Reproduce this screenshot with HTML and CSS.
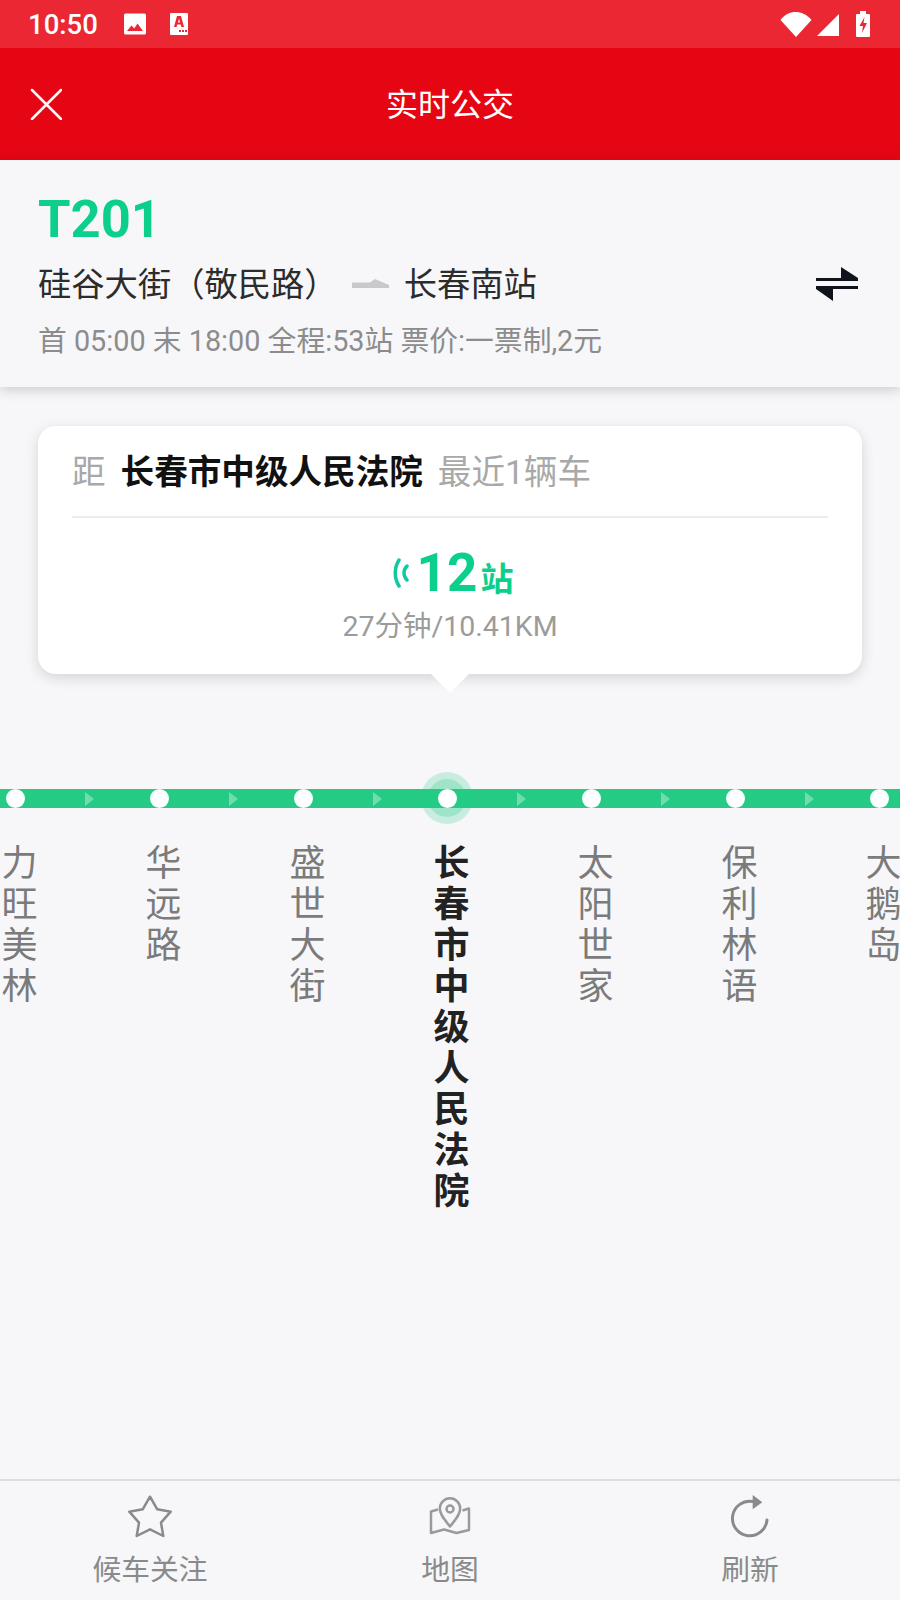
FILE: index.html
```html
<!DOCTYPE html>
<html lang="zh-CN">
<head>
    <meta charset="UTF-8">
    <meta name="viewport" content="width=device-width, initial-scale=1.0">
    <title>实时公交</title>
    <link rel="stylesheet" href="styles.css">
</head>
<body>
    <div class="screen">
        <div class="status">
            <span class="clock">10:50</span>
            <svg class="st-pic" viewBox="0 0 24 24" width="24" height="24">
                <path fill="#fff" d="M1 3a1.500 1.500 0 0 1 1.500-1.500h19A1.500 1.500 0 0 1 23 3v18a1.500 1.500 0 0 1-1.500 1.500h-19A1.500 1.500 0 0 1 1 21z"/>
                <path fill="#ea2733" d="M4 19l4.500-5.500 2.800 3 3.200-5 5.500 7.500z"/>
            </svg>
            <svg class="st-a" viewBox="0 0 20 24" width="20" height="24">
                <path fill="#fff" d="M2 1h16a1 1 0 0 1 1 1v20a1 1 0 0 1-1 1H2a1 1 0 0 1-1-1V2a1 1 0 0 1 1-1z"/>
                <path fill="#ea2733" d="M8 4h4l3 11h-2.600l-.6-2.500H8.200L7.600 15H5zm1 6.500h2L10 6.500zM10 18h2v2h-2zm3 0h2v2h-2zm3 0h2v2h-2z"/>
            </svg>
            <span class="status-fill"></span>
            <svg class="st-wifi" viewBox="0 0 32 26" width="32" height="26">
                <path fill="#fff" d="M0.500 9C4.500 3.500 10 1 15.500 1S27 3.500 31.500 9L16 26z"/>
            </svg>
            <svg class="st-signal" viewBox="0 0 24 24" width="24" height="24">
                <path fill="#fff" d="M23 2v22H1z"/>
            </svg>
            <svg class="st-batt" viewBox="0 0 14 26" width="14" height="26">
                <path fill="#fff" d="M4 0h6v3h3a1 1 0 0 1 1 1v21a1 1 0 0 1-1 1H1a1 1 0 0 1-1-1V4a1 1 0 0 1 1-1h3z"/>
                <path fill="#ea2733" d="M8.500 6L3.500 15H7l-1 7 5-10H7.500z"/>
            </svg>
        </div>

        <div class="topbar">
            <svg class="close" viewBox="0 0 32 32" width="32" height="32">
                <path d="M2 2l29 29M31 2L2 31" stroke="#fff" stroke-width="2.500" stroke-linecap="round" fill="none"/>
            </svg>
            <div class="topbar-title">实时公交</div>
        </div>

        <div class="line-info">
            <div class="line-no">T201</div>
            <div class="route">
                <span class="route-from">硅谷大街（敬民路）</span>
                <svg class="route-arrow" viewBox="0 0 38 10" width="38" height="10">
                    <path fill="#c9c9c9" d="M0 3.500H18L23 0 37 6V9H0z"/>
                </svg>
                <span class="route-to">长春南站</span>
                <span class="route-fill"></span>
                <svg class="swap" viewBox="0 0 42 34" width="42" height="34">
                    <path fill="#10131c" d="M0 11h42v3H0zM25 0l17 11H25zM0 19h42v3H0zM17 34L0 22h17z"/>
                </svg>
            </div>
            <div class="line-meta">首 05:00 末 18:00 全程:53站 票价:一票制,2元</div>
        </div>

        <div class="main">
            <div class="card">
                <div class="card-head">
                    <span class="card-lbl">距</span>
                    <span class="card-stop">长春市中级人民法院</span>
                    <span class="card-lbl">最近1辆车</span>
                </div>
                <div class="card-body">
                    <div class="eta">
                        <svg class="eta-wave" viewBox="0 0 16 30" width="16" height="30">
                            <path d="M6 2C1 10 1 20 6 28M14 8C10 12 10 18 14 22" stroke="#10c9a0" stroke-width="3.500" stroke-linecap="round" fill="none"/>
                        </svg>
                        <span class="eta-num">12</span>
                        <span class="eta-unit">站</span>
                    </div>
                    <div class="eta-sub">27分钟/10.41KM</div>
                </div>
                <div class="card-tail"></div>
            </div>

            <div class="track">
                <div class="track-bar"></div>
                <div class="stops">
                    <div class="stop"><span class="dot"></span><span class="stop-name">力旺美林</span></div>
                    <div class="stop"><span class="dot"></span><span class="stop-name">华远路</span></div>
                    <div class="stop"><span class="dot"></span><span class="stop-name">盛世大街</span></div>
                    <div class="stop stop-cur"><span class="halo"></span><span class="dot"></span><span class="stop-name">长春市中级人民法院</span></div>
                    <div class="stop"><span class="dot"></span><span class="stop-name">太阳世家</span></div>
                    <div class="stop"><span class="dot"></span><span class="stop-name">保利林语</span></div>
                    <div class="stop"><span class="dot"></span><span class="stop-name">大鹅岛</span></div>
                </div>
            </div>
        </div>

        <div class="tabs">
            <div class="tab">
                <svg viewBox="0 0 46 44" width="46" height="44">
                    <path d="M23 1.700L30.300 14.300 43.700 16.700 34 27.700 36.300 41 23 34.300 9.700 41 12 27.700 2.300 16.700 15.700 14.300z" fill="none" stroke="#8a8a8a" stroke-width="2.500" stroke-linejoin="round"/>
                </svg>
                <span>候车关注</span>
            </div>
            <div class="tab">
                <svg viewBox="0 0 46 44" width="46" height="44">
                    <path d="M11 14.500L4 16.500V38L17 34.500 29.500 38 42 35V13.500L35.500 15.500" fill="none" stroke="#9a9a9a" stroke-width="2.500" stroke-linejoin="round"/>
                    <path d="M23 31.500C18 25 12.800 20 12.800 13.500a10.200 10.200 0 0 1 20.400 0C33.200 20 28 25 23 31.500z" fill="#f7f7fa" stroke="#9a9a9a" stroke-width="2.500" stroke-linejoin="round"/>
                    <circle cx="23" cy="14" r="3.500" fill="none" stroke="#9a9a9a" stroke-width="2.500"/>
                </svg>
                <span>地图</span>
            </div>
            <div class="tab">
                <svg viewBox="0 0 46 44" width="46" height="44">
                    <path d="M40 25A17.300 17.300 0 1 1 26 6.500" fill="none" stroke="#8a8a8a" stroke-width="3" stroke-linecap="round"/>
                    <path fill="#8a8a8a" d="M25.700 0l9.600 7.300-9.600 7z"/>
                </svg>
                <span>刷新</span>
            </div>
        </div>
    </div>
</body>
</html>
```

FILE: styles.css
```css
* {
    box-sizing: border-box;
}
html, body {
    margin: 0;
    padding: 0;
}
body {
    font-family: Roboto, "Noto Sans CJK SC", sans-serif;
    background-color: #f7f7fa;
}
.screen {
    width: 900px;
    height: 1600px;
    display: flex;
    flex-direction: column;
    overflow: hidden;
    background-color: #f7f7fa;
}

/* status bar */
.status {
    height: 48px;
    flex: none;
    display: flex;
    align-items: center;
    padding: 0 28px;
    background-color: #ea2733;
    color: #fff;
}
.clock {
    font-size: 27.500px;
    font-weight: 500;
    width: 95px;
}
.st-pic {
    margin-right: 22px;
}
.status-fill {
    flex: 1;
}
.st-wifi {
    margin-right: 4px;
}
.st-signal {
    margin-right: 16px;
}
.st-batt {
    margin-right: 2px;
}

/* red title bar */
.topbar {
    height: 112px;
    flex: none;
    position: relative;
    display: flex;
    align-items: center;
    justify-content: center;
    padding-bottom: 4px;
    background-color: #e60613;
}
.close {
    position: absolute;
    left: 30px;
    top: 40px;
}
.topbar-title {
    color: #fff;
    font-size: 32px;
}

/* line header */
.line-info {
    height: 227px;
    flex: none;
    padding: 29px 38px 0;
    background-color: #f7f7fa;
    box-shadow: 0 3px 12px rgba(0, 0, 0, 0.18);
    position: relative;
}
.line-no {
    color: #0ccf8b;
    font-size: 52.500px;
    font-weight: 700;
    line-height: 60px;
}
.route {
    display: flex;
    align-items: center;
    height: 50px;
    margin-top: 7px;
    font-size: 33.300px;
    color: #2c2c2c;
}
.route-arrow {
    margin: 6px 14px 0 14px;
}
.route-fill {
    flex: 1;
}
.swap {
    margin: 6px 4px 0 0;
}
.line-meta {
    margin-top: 15px;
    color: #8c8c8c;
    font-size: 28.800px;
    line-height: 40px;
}

/* body */
.main {
    flex: 1;
    padding-top: 39px;
}
.card {
    width: 824px;
    height: 248px;
    margin-left: 38px;
    position: relative;
    background-color: #fff;
    border-radius: 18px;
    box-shadow: 0 4px 14px rgba(0, 0, 0, 0.14);
}
.card-head {
    height: 92px;
    margin: 0 34px;
    padding-bottom: 4px;
    display: flex;
    align-items: center;
    gap: 15px;
    border-bottom: 2px solid #ececee;
    font-size: 33.600px;
}
.card-lbl {
    color: #a8a8a8;
}
.card-stop {
    color: #111;
    font-weight: 700;
}
.card-body {
    display: flex;
    flex-direction: column;
    align-items: center;
}
.eta {
    height: 68px;
    margin-top: 21px;
    padding-left: 6px;
    display: flex;
    align-items: center;
    color: #0ccf8b;
    font-weight: 700;
}
.eta-wave {
    margin-right: 8px;
}
.eta-num {
    font-size: 53px;
}
.eta-unit {
    font-size: 33px;
    margin: 8px 0 0 3px;
}
.eta-sub {
    margin-top: 1px;
    color: #9b9b9b;
    font-size: 28.500px;
    line-height: 38px;
}
.card-tail {
    position: absolute;
    left: 393px;
    bottom: -19px;
    width: 0;
    height: 0;
    border-left: 19px solid transparent;
    border-right: 19px solid transparent;
    border-top: 19px solid #fff;
}

/* stops */
.track {
    position: relative;
    margin-top: 115px;
}
.track-bar {
    position: absolute;
    left: 0;
    right: 0;
    top: 0;
    height: 19px;
    background-color: #25cb85;
}
.stops {
    display: flex;
    position: relative;
    margin-left: -57px;
}
.stop {
    width: 144px;
    flex: none;
    position: relative;
    display: flex;
    flex-direction: column;
    align-items: center;
}
/* little arrow between stops */
.stop::after {
    content: "";
    position: absolute;
    left: 142px;
    top: 2.500px;
    width: 0;
    height: 0;
    border-left: 9px solid #72dcb0;
    border-top: 7px solid transparent;
    border-bottom: 7px solid transparent;
}
.dot {
    width: 19px;
    height: 19px;
    border-radius: 50%;
    background-color: #fff;
    position: relative;
}
.halo {
    position: absolute;
    left: 46px;
    top: -17px;
    width: 52px;
    height: 52px;
    border-radius: 50%;
    background-color: rgba(37, 203, 133, 0.22);
}
.halo::after {
    content: "";
    position: absolute;
    left: 7px;
    top: 7px;
    width: 38px;
    height: 38px;
    border-radius: 50%;
    background-color: rgba(37, 203, 133, 0.25);
}
.stop-name {
    margin: 36px 0 0 9px;
    width: 36px;
    font-size: 36px;
    line-height: 41px;
    color: #7b7b7b;
    text-align: center;
}
.stop-cur .stop-name {
    color: #222;
    font-weight: 700;
}

/* bottom tabs */
.tabs {
    height: 121px;
    flex: none;
    display: grid;
    grid-template-columns: repeat(3, 1fr);
    border-top: 2px solid #dedee0;
    background-color: #f7f7fa;
}
.tab {
    display: flex;
    flex-direction: column;
    align-items: center;
    padding-top: 14px;
    color: #8a8a8a;
    font-size: 28.800px;
    line-height: 36px;
}
.tab svg {
    margin-bottom: 13px;
}
```
